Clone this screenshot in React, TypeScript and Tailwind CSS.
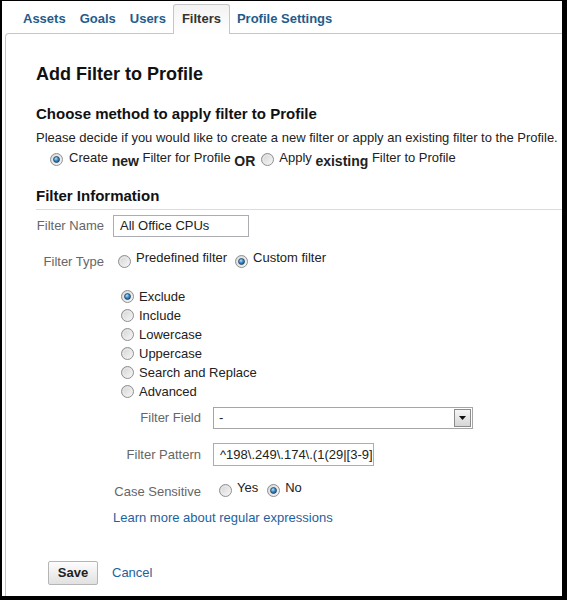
import React from "react";

const tabs = ["Assets", "Goals", "Users", "Filters", "Profile Settings"];
const actions = ["Exclude", "Include", "Lowercase", "Uppercase", "Search and Replace", "Advanced"];

function Radio({ checked, className = "" }: { checked?: boolean; className?: string }) {
  return (
    <svg width="13" height="13" viewBox="0 0 13 13" className={`shrink-0 ${className}`}>
      <defs>
        <linearGradient id="radio-bg" x1="0" y1="0" x2="1" y2="1">
          <stop offset="0" stopColor="#cfcfcf" />
          <stop offset="1" stopColor="#fbfbfb" />
        </linearGradient>
        <radialGradient id="radio-dot" cx="0.4" cy="0.35" r="0.75">
          <stop offset="0" stopColor="#b5e3fb" />
          <stop offset="0.45" stopColor="#3f8fce" />
          <stop offset="1" stopColor="#0f4470" />
        </radialGradient>
      </defs>
      <circle cx="6.5" cy="6.5" r="6" fill="url(#radio-bg)" stroke="#8e8f8f" />
      <circle cx="6.5" cy="6.5" r="4.3" fill="none" stroke="#ececec" strokeWidth="0.8" />
      {checked && <circle cx="6.5" cy="6.5" r="3" fill="url(#radio-dot)" stroke="#1c3b55" strokeWidth="0.7" />}
    </svg>
  );
}

export default function App() {
  return (
    <div className="w-[567px] h-[600px] border-l-2 border-t border-r-[5px] border-b-4 border-black bg-white font-['Liberation_Sans',Arial,sans-serif] text-[13px] text-[#222] flex flex-col overflow-hidden whitespace-nowrap">
      {/* tabs */}
      <div className="flex items-start pl-[14px] pt-[3px]">
        {tabs.map((t) =>
          t === "Filters" ? (
            <div
              key={t}
              className="relative z-10 -mb-px px-2 pt-[6px] pb-[7px] leading-4 font-bold text-[#333] border-x border-t border-[#c6c6c6] rounded-t-[3px] bg-gradient-to-b from-[#f3f3f3] to-white"
            >
              {t}
            </div>
          ) : (
            <div key={t} className="px-[7px] pt-[7px] leading-4 font-bold text-[#1f5c8c]">
              {t}
            </div>
          )
        )}
      </div>

      {/* panel */}
      <div className="ml-[3px] flex-1 border-l border-t border-[#c6c6c6] rounded-tl-[4px] pl-[30px] pt-[29px]">
        <h1 className="text-[18px] leading-[22px] font-bold text-[#111]">Add Filter to Profile</h1>
        <h2 className="mt-[20px] text-[15px] leading-[18px] font-bold text-[#111]">
          Choose method to apply filter to Profile
        </h2>
        <p className="mt-[7px] leading-4">
          Please decide if you would like to create a new filter or apply an existing filter to the Profile.
        </p>
        <div className="mt-[4px] h-4 leading-4 flex items-start pl-[14px]">
          <Radio checked className="mt-[3px]" />
          <span className="ml-[6px]">
            Create <b className="text-[14px] align-[-4px]">new</b> Filter for Profile{" "}
            <b className="text-[14px] align-[-4px]">OR</b>
          </span>
          <Radio className="ml-[6px] mt-[3px]" />
          <span className="ml-[5px]">
            Apply <b className="text-[14px] align-[-4px]">existing</b> Filter to Profile
          </span>
        </div>

        <h2 className="mt-[21px] pb-[4px] border-b border-[#dcdcdc] text-[15px] leading-[18px] font-bold text-[#111]">
          Filter Information
        </h2>

        <div className="mt-[5px] flex items-center gap-[9px]">
          <span className="w-[68px] shrink-0 text-right leading-4 text-[#666]">Filter Name</span>
          <div className="w-[136px] h-[22px] border border-[#abadb3] px-[6px] flex items-center leading-4">
            All Office CPUs
          </div>
        </div>

        <div className="mt-[13px] h-4 flex items-start gap-[9px] leading-4">
          <span className="w-[68px] shrink-0 mt-[4px] text-right text-[#666]">Filter Type</span>
          <div className="flex items-start">
            <Radio className="ml-[5px] mt-[5px]" />
            <span className="ml-[5px]">Predefined filter</span>
            <Radio checked className="ml-[8px] mt-[5px]" />
            <span className="ml-[5px]">Custom filter</span>
          </div>
        </div>

        <div className="mt-[21px] pl-[85px]">
          {actions.map((a, i) => (
            <div key={a} className="h-[19px] flex items-center gap-[5px]">
              <Radio checked={i === 0} />
              <span className="leading-[19px]">{a}</span>
            </div>
          ))}
        </div>

        <div className="pl-[77px]">
          <div className="mt-[6px] flex items-center gap-[12px]">
            <span className="w-[88px] text-right leading-4 text-[#666]">Filter Field</span>
            <div className="w-[260px] h-[22px] border border-[#a5a5a5] flex items-center">
              <span className="flex-1 pl-[5px] leading-4">-</span>
              <div className="w-[17px] h-[18px] mr-px border border-[#8c8c8c] bg-gradient-to-b from-[#f6f6f6] to-[#d6d6d6] flex items-center justify-center">
                <svg width="7" height="4" viewBox="0 0 7 4">
                  <path d="M0 0h7L3.5 4z" fill="#111" />
                </svg>
              </div>
            </div>
          </div>

          <div className="mt-[14px] flex items-center gap-[12px]">
            <span className="w-[88px] text-right leading-4 text-[#666]">Filter Pattern</span>
            <div className="w-[161px] h-[23px] border border-[#abadb3] pl-[6px] flex items-center leading-4 overflow-hidden">
              ^198\.249\.174\.(1(29|[3-9]
            </div>
          </div>

          <div className="mt-[14px] h-4 flex items-start gap-[12px] leading-4">
            <span className="w-[88px] mt-[4px] text-right text-[#666]">Case Sensitive</span>
            <div className="flex items-start">
              <Radio className="ml-[6px] mt-[4px]" />
              <span className="ml-[5px]">Yes</span>
              <Radio checked className="ml-[9px] mt-[4px]" />
              <span className="ml-[5px]">No</span>
            </div>
          </div>

          <a className="mt-[14px] block leading-4 text-[#1d62a0] cursor-pointer">
            Learn more about regular expressions
          </a>
        </div>

        <div className="mt-[35px] pl-[12px] flex items-center">
          <button className="w-[50px] h-[24px] border border-[#b5b5b5] rounded-[2px] bg-gradient-to-b from-[#fdfdfd] to-[#e1e1e1] font-bold text-[13px] text-[#222]">
            Save
          </button>
          <a className="ml-[14px] leading-4 text-[#1d62a0] cursor-pointer">Cancel</a>
        </div>
      </div>
    </div>
  );
}
